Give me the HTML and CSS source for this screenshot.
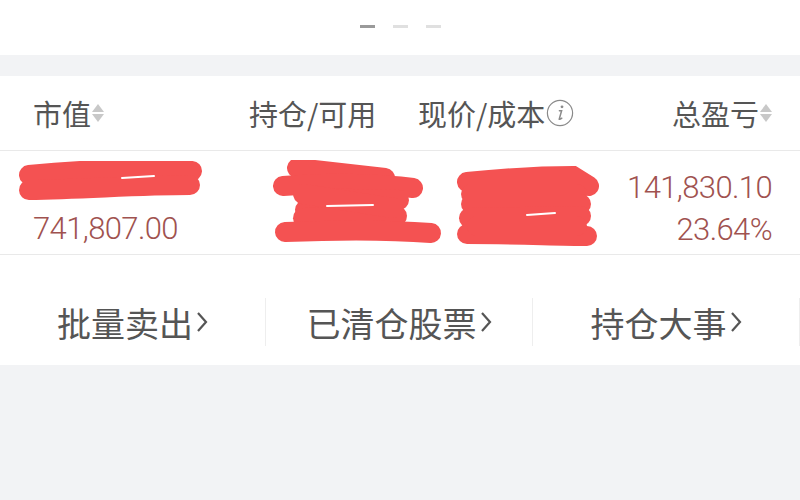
FILE: index.html
```html
<!DOCTYPE html>
<html lang="zh-CN">

<head>
    <meta charset="UTF-8">
    <meta name="viewport" content="width=device-width, initial-scale=1.0">
    <title>持仓</title>
    <link rel="stylesheet" href="styles.css">
</head>

<body>
    <div class="pager">
        <span class="dot active"></span>
        <span class="dot"></span>
        <span class="dot"></span>
    </div>

    <div class="holdings">
        <div class="head-row">
            <div class="cell">市值<span class="sort"><i class="up"></i><i class="down"></i></span></div>
            <div class="cell">持仓/可用</div>
            <div class="cell">现价/成本
                <svg class="info" width="28" height="28" viewBox="0 0 28 28">
                    <circle cx="14" cy="14" r="12.6" fill="none" stroke="#8a8a8a" stroke-width="1.2" />
                    <circle cx="16" cy="7.8" r="1.4" fill="#8a8a8a" />
                    <path d="M13.4 11.8 L15.6 11.8 L13.2 20.2 Q13.8 20.8 15.8 19.2" fill="none" stroke="#8a8a8a" stroke-width="1.5" stroke-linecap="round" />
                </svg>
            </div>
            <div class="cell right">总盈亏<span class="sort"><i class="up"></i><i class="down"></i></span></div>
        </div>

        <div class="data-row">
            <div class="cell">
                <svg class="mask mask-a" width="190" height="42" viewBox="0 0 190 42">
                    <path d="M11 14 C60 9 120 7 174 10" />
                    <path d="M11 29 C70 28 120 24 172 24" />
                    <path class="gleam" d="M104 17 L136 15" />
                </svg>
                <div class="num">741,807.00</div>
            </div>
            <div class="cell">
                <svg class="mask mask-b" width="172" height="84" viewBox="0 0 172 84">
                    <path d="M24 8 L112 18" />
                    <path d="M10 26 C60 22 110 24 140 28" />
                    <path d="M34 38 L126 40" />
                    <path d="M32 50 L118 52" />
                    <path d="M30 58 L124 56" />
                    <path d="M12 72 C60 70 120 70 158 73" />
                    <path d="M30 34 L120 48" />
                    <path class="gleam" d="M54 46 L100 45" />
                </svg>
            </div>
            <div class="cell">
                <svg class="mask mask-c" width="142" height="86" viewBox="0 0 142 86">
                    <path d="M10 18 C50 14 90 12 116 12 L132 22" />
                    <path d="M14 30 L120 30" />
                    <path d="M14 40 L124 40" />
                    <path d="M12 54 L124 52" />
                    <path d="M10 70 C60 70 100 72 130 72" />
                    <path d="M20 62 L120 62" />
                    <path class="gleam" d="M70 51 L98 49" />
                </svg>
            </div>
            <div class="cell right">
                <div class="num">141,830.10</div>
                <div class="num">23.64%</div>
            </div>
        </div>

        <div class="action-row">
            <div class="action">批量卖出<svg class="chev" width="12" height="22" viewBox="0 0 12 22"><path d="M2 2 L10 11 L2 20" /></svg></div>
            <div class="action">已清仓股票<svg class="chev" width="12" height="22" viewBox="0 0 12 22"><path d="M2 2 L10 11 L2 20" /></svg></div>
            <div class="action">持仓大事<svg class="chev" width="12" height="22" viewBox="0 0 12 22"><path d="M2 2 L10 11 L2 20" /></svg></div>
        </div>
    </div>
</body>

</html>
```

FILE: styles.css
```css
* {
  margin: 0;
  padding: 0;
  box-sizing: border-box;
  font-family: "Noto Sans CJK SC", "Noto Sans", sans-serif;
}

body {
  width: 800px;
  height: 500px;
  background-color: #f2f3f5;
  color: #555;
  overflow: hidden;
}

.pager {
  height: 55px;
  background-color: #fff;
  display: flex;
  justify-content: center;
  align-items: center;
  gap: 18px;
  padding-bottom: 2px;
  margin-bottom: 21px;
}

.pager .dot {
  width: 15px;
  height: 3px;
  background-color: #e0e0e0;
}

.pager .dot.active {
  background-color: #9a9a9a;
}

.holdings {
  background-color: #fff;
}

.head-row,
.data-row {
  display: grid;
  grid-template-columns: 216px 169px 1fr auto;
  padding: 0 28px 0 33px;
  border-bottom: 1px solid #e9e9e9;
}

.head-row {
  height: 75px;
  align-items: center;
  font-size: 29px;
  color: #555;
}

.head-row .cell {
  display: flex;
  align-items: center;
  white-space: nowrap;
}

.head-row .info {
  margin-left: 1px;
}

.sort {
  display: inline-flex;
  flex-direction: column;
  gap: 2px;
  margin-left: 1px;
}

.sort i {
  width: 0;
  height: 0;
  border-left: 6px solid transparent;
  border-right: 6px solid transparent;
}

.sort .up {
  border-bottom: 8px solid #c8c8c8;
}

.sort .down {
  border-top: 8px solid #c8c8c8;
}

.data-row {
  height: 104px;
  padding-top: 16px;
}

.data-row .cell.right {
  text-align: right;
}

.num {
  height: 42px;
  line-height: 42px;
  font-family: Roboto, "Liberation Sans", sans-serif;
  font-weight: 300;
  font-size: 31px;
  letter-spacing: -0.6px;
  color: #a0524f;
}

.mask path {
  fill: none;
  stroke: #f45252;
  stroke-linecap: round;
  stroke-width: 20;
}

.mask .gleam {
  stroke: #fff;
  stroke-width: 2;
}

.mask-a {
  display: block;
  margin: -6px 0 5px -15px;
  height: 42px;
}

.mask-b {
  display: block;
  margin: -7px 0 0 24px;
}

.mask-c {
  display: block;
  margin: -3px 0 0 39px;
}

.action-row {
  height: 110px;
  display: grid;
  grid-template-columns: 266px 267px 1fr;
  align-items: center;
  padding-top: 24px;
}

.action {
  height: 48px;
  display: flex;
  justify-content: center;
  align-items: center;
  border-right: 1px solid #eeeeee;
  font-size: 34px;
  color: #555;
  white-space: nowrap;
}

.action .chev {
  margin-left: 3px;
}

.chev path {
  fill: none;
  stroke: #555;
  stroke-width: 2.2;
}
```
